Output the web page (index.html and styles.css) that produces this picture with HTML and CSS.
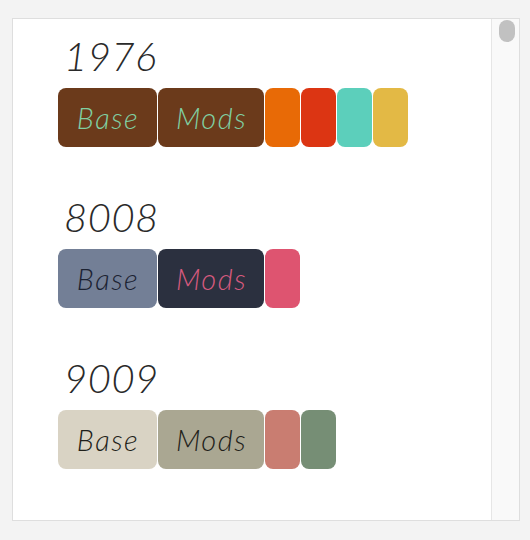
FILE: index.html
```html
<!DOCTYPE html>
<html>
<head>
<meta charset="utf-8">
<link rel="stylesheet" href="styles.css">
</head>
<body>
<div class="frame">
  <div class="content">
    <section class="scheme">
      <h2 class="title">1976</h2>
      <div class="palette">
        <div class="chip wide base" style="background:#6b3a1b;color:#80cfa2">Base</div>
        <div class="chip wide mods" style="background:#6b3a1b;color:#80cfa2">Mods</div>
        <div class="chip" style="background:#e86a06"></div>
        <div class="chip" style="background:#dc3513"></div>
        <div class="chip" style="background:#5ccfbb"></div>
        <div class="chip" style="background:#e3b945"></div>
      </div>
    </section>
    <section class="scheme">
      <h2 class="title">8008</h2>
      <div class="palette">
        <div class="chip wide base" style="background:#737f96;color:#1b2232">Base</div>
        <div class="chip wide mods" style="background:#2b303f;color:#d65a7e">Mods</div>
        <div class="chip" style="background:#de5470"></div>
      </div>
    </section>
    <section class="scheme">
      <h2 class="title">9009</h2>
      <div class="palette">
        <div class="chip wide base" style="background:#d9d3c4;color:#1f1f1a">Base</div>
        <div class="chip wide mods" style="background:#aaa792;color:#1f1f1a">Mods</div>
        <div class="chip" style="background:#c97d71"></div>
        <div class="chip" style="background:#768e75"></div>
      </div>
    </section>
  </div>
  <div class="scrollbar"><div class="thumb"></div></div>
</div>
</body>
</html>
```
FILE: styles.css
```css
html, body {
  margin: 0;
  padding: 0;
}
body {
  background: #f3f3f3;
  padding: 18px 0 0 12px;
  font-family: Lato, "Open Sans", sans-serif;
}
.frame {
  width: 506px;
  height: 501px;
  border: 1px solid #dedede;
  background: #fff;
  display: flex;
}
.content {
  flex: 1;
  padding: 17px 0 0 45px;
  display: flex;
  flex-direction: column;
  gap: 50px;
}
.title {
  margin: 0 0 12px 6px;
  font-size: 40px;
  line-height: 40px;
  font-weight: 300;
  font-style: italic;
  letter-spacing: 0.5px;
  color: #2a2a2a;
}
.palette {
  display: flex;
  gap: 1px;
}
.chip {
  width: 35px;
  height: 59px;
  border-radius: 8px;
  display: flex;
  align-items: center;
  justify-content: center;
  font-size: 29px;
  font-weight: 300;
  font-style: italic;
  letter-spacing: 1.5px;
  padding-left: 1px;
  box-sizing: border-box;
}
.base { width: 99px; }
.mods { width: 106px; }
.scrollbar {
  width: 28px;
  border-left: 1px solid #e6e6e6;
  background: #f9f9f9;
  padding: 1px 0 0 7px;
  box-sizing: border-box;
}
.thumb {
  width: 16px;
  height: 22px;
  border-radius: 8px;
  background: #c1c1c1;
}
```
